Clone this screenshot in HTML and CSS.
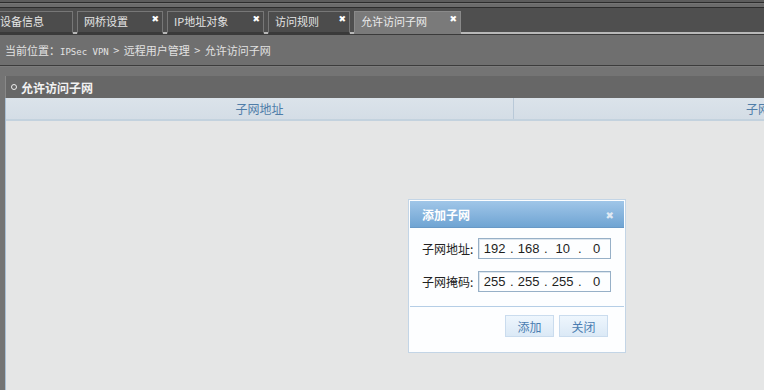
FILE: index.html
```html
<!DOCTYPE html>
<html lang="zh-CN">
<head>
  <meta charset="UTF-8" />
  <title>允许访问子网</title>
  <link rel="stylesheet" href="styles.css">
</head>
<body>
<div class="topline"></div>

<div class="tabbar">
  <div class="tab tab-first"><span>设备信息</span></div>
  <div class="tab tab-bridge"><span>网桥设置</span><i class="x">&#x2716;</i></div>
  <div class="tab tab-ip"><span>IP地址对象</span><i class="x">&#x2716;</i></div>
  <div class="tab tab-rule"><span>访问规则</span><i class="x">&#x2716;</i></div>
  <div class="tab tab-active"><span>允许访问子网</span><i class="x">&#x2716;</i></div>
</div>

<div class="crumb">当前位置：<span class="mono">IPSec VPN</span> &gt; 远程用户管理 &gt; 允许访问子网</div>

<div class="main">
  <div class="panel">
    <div class="panel-title"><span class="dot"></span>允许访问子网</div>
    <div class="grid-head">
      <div class="col col-addr">子网地址</div>
      <div class="col col-mask">子网掩码</div>
    </div>
    <div class="grid-body"></div>
  </div>
</div>

<div class="dialog">
  <div class="dialog-title">
    <span>添加子网</span>
    <i class="dialog-close">&#x2716;</i>
  </div>
  <div class="dialog-body">
    <div class="field">
      <label>子网地址:</label>
      <div class="ip">
        <span>192</span><b>.</b><span>168</span><b>.</b><span>10</span><b>.</b><span>0</span>
      </div>
    </div>
    <div class="field">
      <label>子网掩码:</label>
      <div class="ip">
        <span>255</span><b>.</b><span>255</span><b>.</b><span>255</span><b>.</b><span>0</span>
      </div>
    </div>
  </div>
  <div class="dialog-foot">
    <button class="btn">添加</button>
    <button class="btn">关闭</button>
  </div>
</div>
</body>
</html>
```

FILE: styles.css
```css
body {
  margin: 0;
  font-family: "Noto Sans CJK SC", "DejaVu Sans", sans-serif;
  font-size: 12px;
  background: #747474;
  height: 390px;
  overflow: hidden;
  position: relative;
}
.topline {
  height: 2px;
  background: #5c5c5c;
  border-bottom: 1px solid #2c2c2c;
  box-shadow: 0 4px 0 #6b6b6b;
  margin-bottom: 4px;
}
.tabbar {
  display: flex;
  gap: 4px;
  padding-top: 1px;
  background: #4f4f4f;
  border-top: 1px solid #2c2c2c;
  border-bottom: 2px solid #b8b8b8;
  box-sizing: border-box;
  height: 27px;
  align-items: flex-end;
}
.tab {
  display: flex;
  align-items: center;
  height: 23px;
  box-sizing: border-box;
  padding: 0 3px 2px 6px;
  background: #4c4c4c;
  border: 1px solid #777;
  border-bottom: 2px solid #3a3a3a;
  color: #e4e4e4;
  font-size: 11px;
  margin-bottom: -2px;
}
.tab .x {
  margin-left: auto;
  font-style: normal;
  font-size: 9px;
  color: #fff;
  margin-top: -6px;
}
.tab-first { width: 78px; margin-left: -5px; padding-left: 4px; }
.tab-bridge { width: 86px; }
.tab-ip { width: 97px; }
.tab-rule { width: 82px; }
.tab-active {
  width: 107px;
  background: #7a7a7a;
  border-color: #8a8a8a;
  border-bottom: 2px solid #7a7a7a;
  color: #ececec;
}
.crumb {
  height: 32px;
  line-height: 31px;
  padding-left: 5px;
  background: #6f6f6f;
  color: #e2e2e2;
  border-top: 1px solid #3a3a3a;
  border-bottom: 1px solid #3c3c3c;
  box-sizing: border-box;
  font-size: 11px;
  word-spacing: 2px;
}
.mono {
  font-family: "DejaVu Sans Mono", monospace;
  font-size: 9px;
  word-spacing: 0;
}
.main {
  padding: 9px 0 0 5px;
  border-top: 1px solid #7c7c7c;
}
.panel {
  border-left: 1px solid #a9bfd4;
}
.panel-title {
  height: 22px;
  line-height: 21px;
  background: #676767;
  color: #f2f2f2;
  font-weight: bold;
  padding-left: 5px;
  display: flex;
  align-items: center;
  border-left: 1px solid #888;
  margin-left: -1px;
}
.dot {
  width: 4px;
  height: 4px;
  border: 1px solid #eee;
  border-radius: 50%;
  margin-right: 4px;
}
.grid-head {
  display: flex;
  height: 21px;
  background: linear-gradient(#dbe3ea, #d4dde6);
  border-bottom: 2px solid #c3d2de;
  color: #4f7da8;
}
.col {
  line-height: 21px;
  text-align: center;
  flex-shrink: 0;
}
.col-addr {
  width: 507px;
  border-right: 1px solid #b9c9d8;
}
.col-mask {
  width: 512px;
}
.grid-body {
  height: 280px;
  background: #e5e6e6;
}
.dialog {
  position: absolute;
  left: 408px;
  top: 199px;
  width: 218px;
  height: 154px;
  box-sizing: border-box;
  border: 1px solid #c3d5e6;
  background: #fdfeff;
  padding: 1px;
}
.dialog-title {
  height: 26px;
  display: flex;
  align-items: center;
  padding: 0 10px 0 12px;
  background: linear-gradient(#a0c6e8, #6fa4d3);
  color: #fff;
  font-weight: bold;
  border-bottom: 1px solid #6899c6;
}
.dialog-close {
  margin-left: auto;
  font-style: normal;
  font-size: 10px;
  color: #dfe9f3;
}
.dialog-body {
  padding: 10px 13px 0 12px;
  display: flex;
  flex-direction: column;
  gap: 12px;
  height: 79px;
  border-bottom: 1px solid #b5cee6;
  box-sizing: border-box;
}
.field {
  display: flex;
  align-items: center;
  gap: 3px;
  color: #222;
}
.field label {
  width: 53px;
  font-size: 12px;
}
.ip {
  display: flex;
  align-items: center;
  width: 134px;
  height: 21px;
  box-sizing: border-box;
  padding-left: 3px;
  border: 1px solid #97b0c7;
  box-shadow: inset 1px 1px 0 #dde6ee;
  font-family: "Liberation Sans", sans-serif;
  font-size: 13px;
  color: #1e1e1e;
}
.ip span {
  width: 26px;
  text-align: center;
}
.ip b {
  font-weight: normal;
  width: 8px;
  text-align: center;
}
.dialog-foot {
  display: flex;
  justify-content: flex-end;
  gap: 5px;
  padding: 8px 16px 0 0;
}
.btn {
  width: 49px;
  height: 22px;
  border: 1px solid #cadcee;
  background: linear-gradient(#eef6fd, #dbe9f6);
  color: #4a7db1;
  font-family: "Noto Sans CJK SC", sans-serif;
  font-size: 12px;
  padding: 0;
}
```
